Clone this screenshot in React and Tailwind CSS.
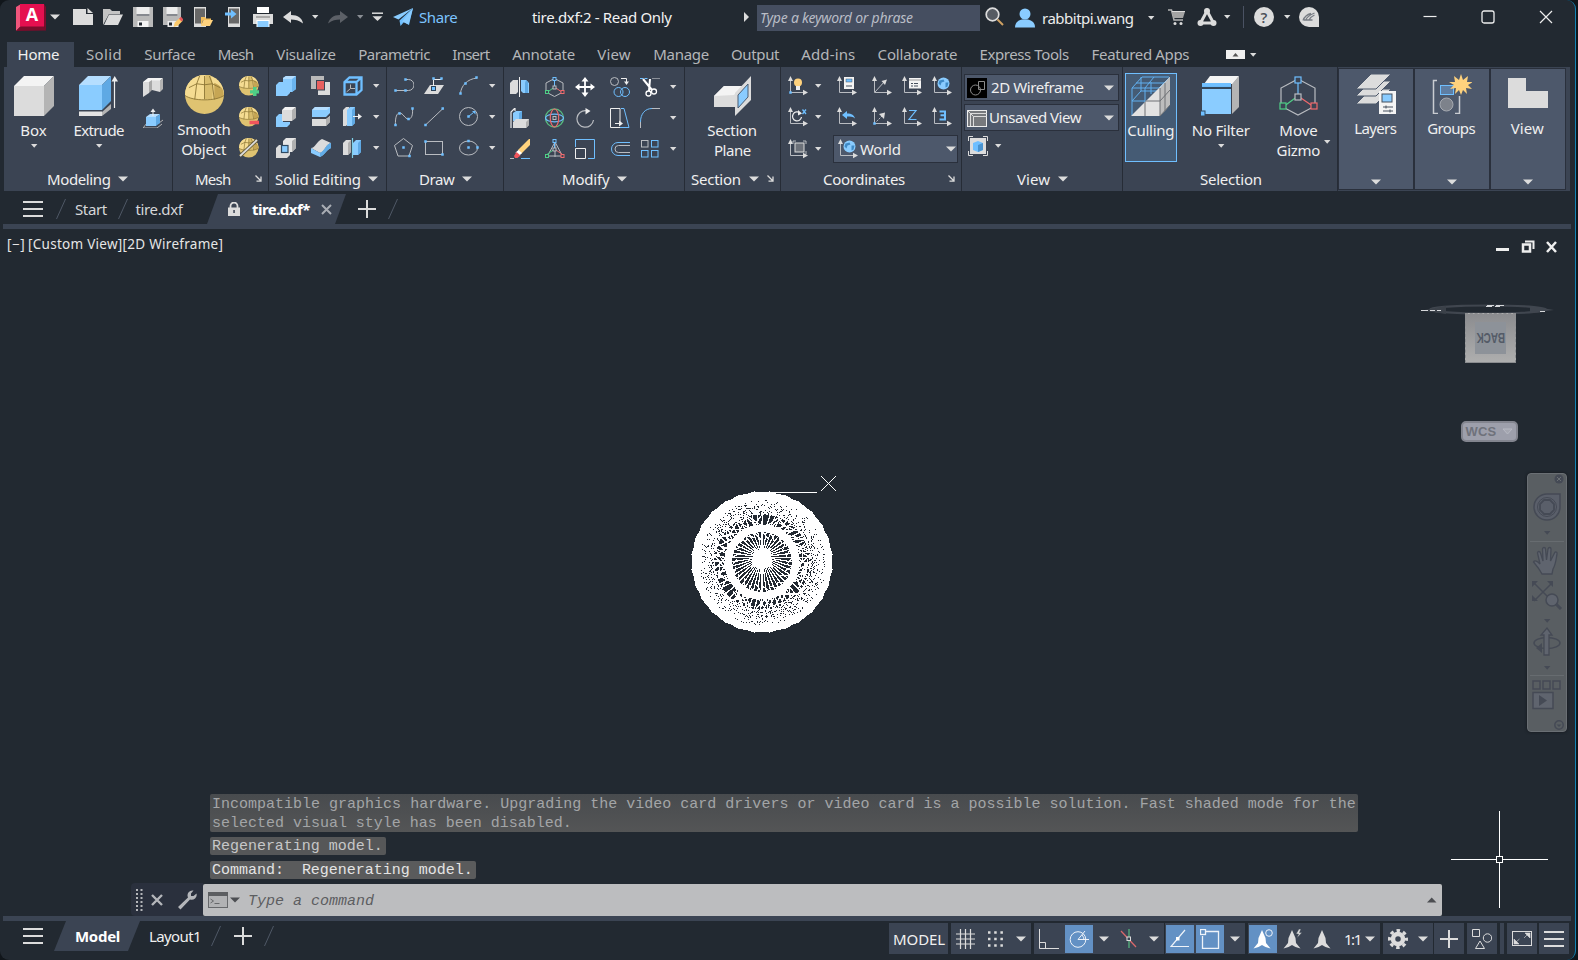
import { useLayoutEffect, useRef } from "react";

const L = "#dcdcdc";
const B = "#6fbfff";
const BL = "#8accff";

/* Text set to a given width: the letter spacing is worked out from the font's natural width. */
function T({ w, children, className = "" }) {
  const ref = useRef(null);
  useLayoutEffect(() => {
    const el = ref.current;
    el.style.letterSpacing = "0px";
    const natural = el.offsetWidth;
    el.style.letterSpacing = `${(w + 1.6 - natural) / children.length}px`;
  }, [w, children]);
  return (
    <span className="flex shrink-0 -ml-px mr-px whitespace-pre" style={{ width: w }}>
      <span ref={ref} className={`inline-block shrink-0 whitespace-pre ${className}`}>{children}</span>
    </span>
  );
}

function Svg({ w = 20, h = 20, className = "", children }) {
  return (
    <svg width={w} height={h} viewBox={`0 0 ${w} ${h}`} fill="none" className={`block shrink-0 ${className}`}>
      {children}
    </svg>
  );
}

function Caret({ big, className = "", color = L }) {
  return big ? (
    <Svg w={10} h={6} className={className}><path d="M0 .5h10L5 5.500z" fill={color} /></Svg>
  ) : (
    <Svg w={8} h={6} className={className}><path d="M1 1h6.400L4.200 4.800z" fill={color} /></Svg>
  );
}

function Launcher({ className = "" }) {
  return (
    <Svg w={7} h={7} className={className}>
      <path d="M.5.5l5 5M6 1.5v4.6H1.5" stroke={L} strokeWidth="1.3" />
    </Svg>
  );
}

/* ---------- title bar ---------- */
const Logo = () => (
  <Svg w={30} h={28}>
    <path d="M0 4L5 1v22l-5 5z" fill="#f0557c" />
    <path d="M0 28l5-5h23l2 4.5z" fill="#7a0d2c" />
    <path d="M28 1l2 3v24l-2-5z" fill="#7a0d2c" />
    <rect x="4" y="1" width="24" height="22.5" fill="#e51050" />
    <text x="16" y="18" textAnchor="middle" fontSize="18" fontWeight="700" fill="#fff" fontFamily="Open Sans, sans-serif">A</text>
  </Svg>
);
const NewFile = () => (
  <Svg><path d="M0 2h13v5h7v11H0z" fill={L} /><path d="M14.5 1l5.5 5h-5.5z" fill={L} /></Svg>
);
const OpenFile = () => (
  <Svg><path d="M0 18V2h7l2 2h8v3H6z" fill="#c4c4c4" /><path d="M6 7.5h14L15 18H1z" fill={L} /></Svg>
);
const Save = ({ pencil }) => (
  <Svg>
    <path d={pencil ? "M0 0h18v14l-4 4H0z" : "M0 0h20v20H0z"} fill="#b9b9b9" />
    <rect x="3.5" y="0" width={pencil ? 11 : 13} height="9" fill="#ececec" />
    <rect x="3.5" y="7.3" width={pencil ? 11 : 13} height="1.4" fill="#5c6068" />
    <rect x="4.5" y="14" width="11" height="6" fill={pencil ? "#ececec" : "#f4f4f4"} />
    <rect x="6" y="15.5" width="3" height="3" fill="#222931" />
    {pencil && <><path d="M10.5 20l1.3-4.5 5-4.7 3 3-5 5z" fill="#fbc96a" /><path d="M16 11.8l2-2 2.3 2.6-1.8 2z" fill="#e8555a" /></>}
  </Svg>
);
const MobileOpen = () => (
  <Svg>
    <rect x="1" y="0" width="12" height="20" fill={L} /><rect x="2" y="1.5" width="10" height="15" fill="#686868" />
    <path d="M8 19V10h4l1 1.5h5V13H10z" fill="#f3bd59" /><path d="M10.5 13H20l-3 6H8z" fill="#ffd27d" />
  </Svg>
);
const MobileSend = () => (
  <Svg>
    <rect x="5" y="0" width="12" height="20" fill={L} /><rect x="6" y="1.5" width="10" height="15" fill="#686868" />
    <path d="M2 5.5h6V2.5L13.5 7 8 11.5v-3H2z" fill={B} />
  </Svg>
);
const Print = () => (
  <Svg><rect x="4" y="0" width="12" height="6" fill="#fff" /><path d="M0 7h20v10H0z" fill={L} /><path d="M3 10h14" stroke="#777" /><rect x="3.5" y="13" width="13" height="7" fill="#fff" /><rect x="4.5" y="14" width="11" height="6" fill={BL} /></Svg>
);
const Undo = ({ redo }) => (
  <Svg>
    <path d={redo ? "M20 10l-8-6v4C5 8 2 11 0 16.5 4 13 8 12.5 12 12.5V16z" : "M0 10l8-6v4c7 0 11 3 12 8.500C16 13 12 12.500 8 12.500V16z"} fill={redo ? "#5c6067" : L} />
  </Svg>
);
const Send = () => (
  <Svg><path d="M20 1L0 10l5.500 2.500z" fill={BL} /><path d="M20 1L6.500 13.500 7.500 19l3.500-4 5 3z" fill={B} /><path d="M20 1L9 14.500l6.500 3z" fill={BL} /></Svg>
);
const Magnifier = () => (
  <Svg><circle cx="7.500" cy="7.500" r="6.300" fill="#565b62" stroke={L} strokeWidth="1.700" /><path d="M12.500 12.500l5.500 5.500" stroke="#cfa163" strokeWidth="2" /></Svg>
);
const Person = () => (
  <Svg><circle cx="10" cy="6" r="5.500" fill={BL} /><path d="M0 19.500c0-5 3-7 7-8h6c4 1 7 3 7 8z" fill={BL} /></Svg>
);
const Cart = () => (
  <Svg w={18} h={18} className="ml-[13px]"><path d="M0 2h3.500l2.500 10h9" stroke="#b4b4b4" strokeWidth="1.500" /><path d="M3.500 3.500h13.500l-2 6.500H5.500z" fill="#a4a4a4" /><path d="M4 3.500h13" stroke={L} /><circle cx="7" cy="15.500" r="1.500" fill={L} /><circle cx="13" cy="15.500" r="1.500" fill={L} /></Svg>
);
const Apps = () => (
  <Svg><path d="M10 4L3.500 16h13z" stroke={L} strokeWidth="3" /><circle cx="10" cy="4" r="3" fill={L} /><circle cx="3.500" cy="16" r="3" fill={L} /><circle cx="16.500" cy="16" r="3" fill={L} /></Svg>
);
const Help = () => (
  <Svg><circle cx="10" cy="10" r="10" fill={L} /><text x="10" y="15.500" textAnchor="middle" fontSize="15" fontWeight="600" fill="#4a4f57" fontFamily="Open Sans, sans-serif">?</text></Svg>
);
const Bubble = () => (
  <Svg><path d="M10 0a10 10 0 0 1 10 10v10H10A10 10 0 0 1 10 0z" fill={L} /><path d="M4 13.500C5.500 9.500 8 7.500 12 6.500M6.500 13.500c1-3 4-5.500 9-7.500M9.500 13.500C11 11 13 9 15.500 8M5 13h8.500" stroke="#777c84" strokeWidth="1.300" /></Svg>
);

function TitleBar() {
  return (
    <header className="flex h-[34px] items-center text-[15px]">
      <div className="ml-4"><Logo /></div>
      <Caret big className="ml-1" />
      <div className="ml-[13px] flex gap-[10px]">
        <NewFile /><OpenFile /><Save /><Save pencil /><MobileOpen /><MobileSend /><Print /><Undo />
      </div>
      <Caret className="ml-2" />
      <div className="ml-[9px]"><Undo redo /></div>
      <Caret className="ml-2" color="#8a8e94" />
      <Svg w={12} h={10} className="ml-2"><path d="M0 1.200h11" stroke={L} strokeWidth="1.500" /><path d="M.500 4.200h10L5.500 9z" fill={L} /></Svg>
      <div className="ml-[9px]"><Send /></div>
      <div className="ml-[7px] text-[#7cc4ff]"><T w={36.500}>Share</T></div>
      <div className="ml-[76.500px] text-[#f2f2f2]"><T w={138}>tire.dxf:2 - Read Only</T></div>
      <Svg w={7} h={10} className="ml-[72px]"><path d="M1 0l5 5-5 5z" fill={L} /></Svg>
      <div className="mt-[2px] ml-[7px] flex h-[26px] w-[223px] items-center bg-[#454e60] pl-[4px] text-[#b9bdc6] italic"><T w={151} className="-mt-px text-[14px]">Type a keyword or phrase</T></div>
      <div className="ml-[5px]"><Magnifier /></div>
      <div className="mt-[2px] ml-[10px]"><Person /></div>
      <div className="mt-[2px] ml-[8px] text-[#ececec]"><T w={90}>rabbitpi.wang</T></div>
      <Caret className="mt-[2px] ml-[14px]" />
      <Cart />
      <div className="ml-[11px]"><Apps /></div>
      <Caret className="ml-[6px]" />
      <div className="ml-3 h-[22px] w-px bg-[#4a5263]" />
      <div className="ml-[10px]"><Help /></div>
      <Caret className="ml-[9px]" />
      <div className="ml-2"><Bubble /></div>
      <div className="ml-[104px] flex gap-[44px]">
        <Svg w={14} h={14}><path d="M0.500 6.500h13" stroke="#eee" strokeWidth="1.200" /></Svg>
        <Svg w={14} h={14}><rect x="1" y="1" width="12" height="12" rx="2" stroke="#eee" strokeWidth="1.300" /></Svg>
        <Svg w={14} h={14}><path d="M1 1l12 12M13 1L1 13" stroke="#eee" strokeWidth="1.200" /></Svg>
      </div>
    </header>
  );
}

const TABS = [
  ["Solid", 34.3], ["Surface", 49.4], ["Mesh", 34.6], ["Visualize", 58], ["Parametric", 70], ["Insert", 36],
  ["Annotate", 61], ["View", 32], ["Manage", 53.7], ["Output", 46.3], ["Add-ins", 52.3], ["Collaborate", 78],
  ["Express Tools", 88], ["Featured Apps", 96],
];

function Tabs() {
  return (
    <nav className="mt-2 flex h-[25px] items-center pl-[7px] text-[15px] text-[#b4b6b9]">
      <div className="flex h-full w-[67px] items-center bg-[#3b4453] pl-[11.500px] text-[#f0f0f0]"><T w={40.5}>Home</T></div>
      <div className="ml-[13px] flex gap-6">
        {TABS.map(([t, w]) => <T key={t} w={w}>{t}</T>)}
      </div>
      <Svg w={19} h={9} className="ml-[37px]"><rect width="19" height="9" fill="#f0f0f0" /><path d="M6.500 6.500h6L9.500 3z" fill="#555" /></Svg>
      <Caret className="ml-[4px]" />
    </nav>
  );
}

/* ---------- ribbon icons ---------- */
const BoxBig = () => (
  <Svg w={40} h={40}><path d="M0 10L10 0h30L30 10z" fill="#f4f4f4" /><path d="M0 10h30v30H0z" fill={L} /><path d="M30 10L40 0v30L30 40z" fill="#b4b4b4" /></Svg>
);
const ExtrudeBig = () => (
  <Svg w={40} h={40}>
    <path d="M0 9l9-9h23l-9 9z" fill="#b5deff" /><path d="M0 9h23v25H0z" fill={BL} /><path d="M23 9l9-9v25l-9 9z" fill="#5fa9e4" />
    <path d="M0 35.500h23V40H0z" fill="#e4e4e4" /><path d="M23 36l9-8v5l-9 7z" fill="#b4b4b4" />
    <path d="M35.500 4v28" stroke="#eee" strokeWidth="1.200" /><path d="M32.500 5.500h6.500L35.700 0z" fill="#eee" />
  </Svg>
);
const Polysolid = () => (
  <Svg><path d="M0 5l5-4h15l-3 3H9L6 6z" fill="#f4f4f4" /><path d="M0 5h6v11l-6 4z" fill={L} /><path d="M6 5l3-2v10l-3 3z" fill="#a8a8a8" /><path d="M9 3.500h8V15l-8-2z" fill={L} /><path d="M17 3.500l3-2.500v11l-3 3z" fill="#b4b4b4" /></Svg>
);
const Presspull = () => (
  <Svg><path d="M0 20l4-5h12l4-3M0 20h14l5-4" stroke="#b4b4b4" /><path d="M3 9l4-3h10l-4 3z" fill="#b5deff" /><path d="M3 9h10v9H3z" fill={BL} /><path d="M13 9l4-3v9l-4 3z" fill="#5fa9e4" /><path d="M10 8V3" stroke="#eee" /><path d="M7.500 4h5L10 .500z" fill="#eee" /></Svg>
);
const Sphere = ({ w = 20, children }) => (
  <Svg w={w} h={w}>
    <g transform={`scale(${(w > 20 ? w : 19.5) / 40})`}>
      <circle cx="20" cy="20" r="20" fill="#dfc371" />
      <path d="M0 21C0 8 9 0 20 0s20 8 20 21c-4 3-11 4.500-19 4.500S4 24 0 21z" fill="#f5dc92" />
      <path d="M21 0h5l3 10-1 15H20V9z" fill="#d9bd6c" /><path d="M30 8c4 2 8 4 9 8 1 4 1 5 0 6l-9 3z" fill="#c6a654" />
      <path d="M12 9l8 1 8-1 8 4M12 9l-8 4M12 9l-2 16M20 1v24M28 9l2 16M28 9L25 1M12 9l3-8M0 21c4 3 12 4.500 20 4.500S36 24 40 21" stroke="#8a7434" strokeWidth={w > 20 ? 0.9 : 1.4} />
    </g>
    {children}
  </Svg>
);
const SphereAdd = () => <Sphere><path d="M14 11h3.500v3.300H20v3.200h-2.500V20H14v-2.500h-3v-3.200h3z" fill="#4fcf86" /></Sphere>;
const SphereSub = () => <Sphere><path d="M10.500 13.700H20v3.600h-9.500z" fill="#f0555c" /></Sphere>;
const SphereCut = () => <Sphere><path d="M1 18L18 2" stroke="#5f5530" strokeWidth="3.500" /><path d="M1 18L18 2" stroke={L} strokeWidth="1.800" /></Sphere>;

const Union = () => (
  <Svg><path d="M7 2l3-2h10v13l-4 3h-2v1l-3 3H0V9l3-3h4z" fill={BL} /><path d="M7 2l3-2h10l-3 3H7z" fill="#b5deff" /><path d="M16 3l4-3v13l-4 3z" fill="#6bb4ee" /></Svg>
);
const Intersect = () => (
  <Svg><path d="M0 0h13v13H0z" fill="#b9b9b9" /><path d="M7 6h12v13H7z" fill={L} /><rect x="5.500" y="4.500" width="8" height="9.500" fill="#e8605f" stroke="#3b4453" /></Svg>
);
const Subtract = () => (
  <Svg><path d="M0 10l3-3h4v8h7v2l-3 3H0z" fill={BL} /><path d="M6 3l3-3h11l-3 3z" fill="#f4f4f4" /><path d="M6 3h10v11H6z" fill={L} /><path d="M16 3l4-3v11l-4 3z" fill="#b0b0b0" /></Svg>
);
const Interfere = () => (
  <Svg><path d="M0 10l3-3h11v10l-3 3H0z" fill={L} /><path d="M7 3l3-3h10v10l-4 4H7z" fill="#e6e6e6" /><path d="M16 3l4-3v10l-4 4z" fill="#b0b0b0" /><rect x="5.500" y="7.500" width="6.500" height="7" fill={BL} stroke="#2f4a63" strokeWidth="1.200" /></Svg>
);
const Edges = () => (
  <Svg><path d="M1.500 6l5-4.500h12V14l-5 4.500h-12zM1.500 6h12v12.500M13.500 6l5-4.500" stroke={B} strokeWidth="2.300" /><path d="M7.500 8.500v4l-4 3.500M7.500 12.500H12" stroke="#b9b9b9" /></Svg>
);
const Slice = () => (
  <Svg><path d="M1 3l3-3h15v6l-4 4H1z" fill={BL} /><path d="M1 3l3-3h15l-3 3z" fill="#b5deff" /><path d="M1 12h14l4-3v6l-4 4H1z" fill={L} /><path d="M15 12l4-3v6l-4 4z" fill="#b0b0b0" /><path d="M0 11h15l5-4" stroke="#3b4453" /></Svg>
);
const ExtrudeFace = () => (
  <Svg><path d="M0 3l3-3h3v16l-3 3H0z" fill={L} /><path d="M4 3l3-3h5v16l-3 3H4z" fill={BL} /><path d="M9 3l3-3v16l-3 3z" fill="#5fa9e4" /><path d="M10 9.500h7" stroke="#eee" /><path d="M15 6.500l4 3-4 3z" fill="#eee" /></Svg>
);
const Thicken = () => (
  <Svg><path d="M0 10c4 0 6-7 11-9l9 4c-5 1-6 8-11 10z" fill={L} /><path d="M0 10l9 5c5-2 6-9 11-10v5c-5 2-6 7-11 9l-9-4z" fill={BL} /><path d="M9 15c5-2 6-9 11-10v5c-5 2-6 7-11 9z" fill="#62ace6" /></Svg>
);
const Separate = () => (
  <Svg><path d="M0 5l3-3h5v12l-3 3H0z" fill={L} /><path d="M5 5l3-3v12l-3 3z" fill="#b0b0b0" /><path d="M10 5l3-3h5v12l-3 3h-5z" fill={BL} /><path d="M15 5l3-3v12l-3 3z" fill="#5fa9e4" /><path d="M9.500 0v20" stroke="#7fd0e8" strokeWidth="1.200" /></Svg>
);

const P = ({ x, y }) => <rect x={x - 1.25} y={y - 1.25} width="2.500" height="2.500" fill={B} />;
const G = "#b9bcc1";
const Polyline = () => <Svg><path d="M1.500 14.500h10M11.500 3.500h3a5.200 5.200 0 0 1 0 11h-3" stroke={G} /><P x={1.500} y={14.500} /><P x={11.500} y={14.500} /><P x={11.500} y={3.500} /></Svg>;
const PlanarSurf = () => <Svg><path d="M6 9h14l-6 9H0z" fill={L} /><path d="M9.500 13V3.500h8" stroke="#eee" /><rect x="7.500" y="10.500" width="4" height="4" fill={B} stroke="#2c4258" /><P x={9.500} y={2.500} /><P x={17.500} y={2.500} /></Svg>;
const Arc = () => <Svg><path d="M1.500 17.500C2 10 8 3 18 2" stroke={G} /><P x={1.500} y={17.500} /><P x={6.500} y={7.500} /><P x={17.500} y={1.500} /></Svg>;
const Spline = () => <Svg><path d="M1.500 18.500C1 10 3 6 5.500 6c4 0 5 6 9 6 3 0 4.500-4 4-10" stroke={G} /><P x={1.500} y={18} /><P x={5.500} y={6.500} /><P x={14.500} y={12} /><P x={18.500} y={1.500} /></Svg>;
const Line = () => <Svg><path d="M1.500 18L19 1.500" stroke={G} /><P x={1.500} y={18} /><P x={18.700} y={1.500} /></Svg>;
const Circle = () => <Svg><circle cx="9.500" cy="9.500" r="9" stroke={G} /><path d="M9.500 9.500l5-4" stroke={B} /><path d="M13 4h3.500v3.500z" fill={B} /><P x={9.500} y={9.500} /></Svg>;
const Polygon = () => <Svg><path d="M9.500.500l9 7-3.500 10.500H4L.500 7.500z" stroke={G} /><P x={9.500} y={9.500} /><P x={15.500} y={18} /></Svg>;
const Rect = () => <Svg><rect x="1.500" y="3.500" width="17" height="13" stroke={G} /><P x={1.500} y={3.500} /><P x={18.500} y={16.500} /></Svg>;
const Ellipse = () => <Svg><ellipse cx="9.500" cy="10" rx="9" ry="7" stroke={G} /><P x={9.500} y={9.500} /><P x={9.500} y={3} /><P x={18.500} y={9.500} /></Svg>;

const Mirror = () => <Svg><path d="M0 6l3-3h5v12l-2 2H0z" fill={L} /><path d="M11 3h5l3 3v10h-6l-2-2z" fill={BL} /><path d="M16 3l2 2v11h-3V6z" fill="#5fa9e4" /><path d="M9.500 0v20" stroke="#eee" /></Svg>;
const Gizmo = ({ scale = 1, tri }) => (
  <Svg w={20 * scale} h={20 * scale}>
    <g transform={`scale(${scale})`} strokeWidth={scale > 1 ? 0.6 : 1}>
      {tri ? <path d="M10 3L2.500 17h15zM10 2v16" stroke={G} /> : <path d="M9.500 1.500L18 6v9l-8.500 4.500L1 15V6z" stroke={G} />}
      <path d="M9.500 3v7" stroke={B} /><path d="M9.500 10L2 15.500" stroke="#4fcf86" /><path d="M9.500 10l8 5.500" stroke="#f0696c" />
      <rect x="8" y=".500" width="3" height="3" fill="#3b4453" stroke={B} />
      <rect x="8" y="9" width="3" height="3" fill="#3b4453" stroke={G} />
      <rect x=".500" y={tri ? 15.5 : 13.5} width="3" height="3" fill="#3b4453" stroke="#4fcf86" />
      <rect x="16" y={tri ? 15.5 : 13.5} width="3" height="3" fill="#3b4453" stroke="#f0696c" />
    </g>
  </Svg>
);
const Move = () => <Svg><path d="M10 2v16M2 10h16" stroke="#fff" strokeWidth="1.800" /><path d="M6.500 4.500h7L10 0zM6.500 15.500h7L10 20zM4.500 6.500v7L0 10zM15.500 6.500v7L20 10z" fill="#fff" /></Svg>;
const Copy = () => <Svg><circle cx="4.500" cy="4.500" r="4" stroke={G} /><path d="M11 1.500h5.500V5" stroke="#eee" /><path d="M14 4.500h5L16.500 8z" fill="#eee" /><circle cx="8.500" cy="15" r="4.500" stroke={B} /><circle cx="15" cy="15" r="4.500" stroke={B} /></Svg>;
const Trim = () => <Svg><path d="M0 1.500h9" stroke={B} strokeDasharray="3 1.500" /><path d="M12 1.500h8" stroke="#8b9098" /><path d="M3 2l9 11M10 2l-1 12" stroke="#fff" strokeWidth="2" /><circle cx="8.500" cy="16.500" r="2.500" stroke="#fff" strokeWidth="1.300" /><circle cx="14" cy="14.500" r="2.500" stroke="#fff" strokeWidth="1.300" /></Svg>;
const Align = () => <Svg><path d="M1 20V4l4-4v3" stroke="#eee" strokeWidth="1.200" /><path d="M3 5l3-2h6v7l-3 3H3z" fill={BL} /><path d="M9 5l3-2v7l-3 3z" fill="#5fa9e4" /><path d="M3 14l3-3h13v6l-3 3H3z" fill={L} /><path d="M16 14l3-3v6l-3 3z" fill="#b0b0b0" /></Svg>;
const Rotate3D = () => <Svg><circle cx="9.500" cy="10" r="9" stroke="#58bd80" strokeWidth="1.300" /><ellipse cx="9.500" cy="10" rx="9" ry="3.800" stroke={B} strokeWidth="1.200" /><ellipse cx="9.500" cy="10" rx="4.200" ry="9" stroke="#e8696c" strokeWidth="1.200" /><rect x="8" y="8.500" width="3" height="3" fill="#3b4453" stroke={G} /></Svg>;
const Rotate = () => <Svg><path d="M11 2.600A8.300 8.300 0 1 0 18.500 12" stroke={G} strokeWidth="1.200" /><path d="M10.500 0l5 3-5 3.500z" fill="#eee" /></Svg>;
const Stretch = () => <Svg><path d="M10 15.500V.500H.500v19h9.500" stroke="#eee" /><path d="M11 .500h3l5 19h-9" stroke={B} /><path d="M5 15.500h5" stroke="#eee" /><path d="M9 12.500l4 3-4 3z" fill="#eee" /></Svg>;
const Fillet = () => <Svg><path d="M.500 20v-6" stroke={G} /><path d="M.500 14C.500 6 5 .500 12 .500" stroke={B} /><path d="M12 .500h8" stroke={G} /></Svg>;
const Erase = () => <Svg><path d="M0 19.500h4" stroke={G} /><path d="M11 19.500h9" stroke={B} /><path d="M8 11L19 0h1v6l-9 9z" fill="#ffd27d" /><path d="M5.500 13.500l3-2.500 3.500 3-3 3z" fill="#fff" /><path d="M4 17l2.500-4 4 3.500-3 2.500H5z" fill="#f0555c" /></Svg>;
const Scale = () => <Svg><path d="M.500 8V.500h19v19H13" stroke={B} /><path d="M.500 9.500h10v10H.500z" stroke="#eee" /></Svg>;
const Offset = () => <Svg><path d="M20 3.500H8a6.500 6.500 0 0 0 0 13h12" stroke={B} /><path d="M20 6.500H8.500a3.500 3.500 0 0 0 0 7H20" stroke={G} /></Svg>;
const ArrayIcon = () => <Svg><rect x="1.500" y="1.500" width="6.500" height="6.500" stroke={G} /><rect x="11.500" y="1.500" width="6.500" height="6.500" stroke={B} /><rect x="1.500" y="11.500" width="6.500" height="6.500" stroke={B} /><rect x="11.500" y="11.500" width="6.500" height="6.500" stroke={B} /></Svg>;

const SectionBig = () => (
  <Svg w={40} h={40}><path d="M1 20l10-10h18v21H1z" fill={L} /><path d="M1 20l10-10h18L21 19z" fill="#f4f4f4" /><path d="M22 17L38 0v24L22 40z" fill={L} /><path d="M25 19l10-11v13L25 32z" fill={BL} stroke="#4a5d73" /></Svg>
);

const Axes = ({ children }) => (
  <Svg><path d="M2.500 4v12.500H16" stroke={G} /><path d="M0 5h5L2.500 0zM15 13.700v5.600l5-2.800z" fill={L} />{children}</Svg>
);
const Globe = ({ x = 11.5, y = 7.5 }) => <g transform={`translate(${x} ${y})`}><circle r="6" fill={BL} /><path d="M-4-3l4-1 1 2-3 1-1 3-2-2zM2-1l3 0-1 4-2 1z" fill="#3f8ac6" /></g>;
const UcsIcon = () => <Axes><circle cx="10" cy="6.500" r="4" fill="#ffd27d" /><path d="M8 10h4v4H8z" fill="#eee" /><P x={2.500} y={16.500} /></Axes>;
const UcsCalc = () => <Axes><rect x="7" y="1" width="10" height="12" fill="#f4f4f4" /><rect x="9" y="3" width="6" height="3" fill={B} stroke="#46505e" strokeWidth=".500" /><path d="M9 10h6" stroke="#46505e" /></Axes>;
const UcsArrow = () => <Axes><path d="M3 16L13 5" stroke={G} /><path d="M9.500 5L15 3.500 13 9z" fill={L} /></Axes>;
const UcsNamed = () => <Axes><rect x="7" y="2" width="12" height="10.500" fill="#f4f4f4" /><path d="M7 4h12" stroke="#999" /><path d="M9 7.500h2m1 0h4M9 10h2m1 0h4" stroke="#46505e" /></Axes>;
const UcsWorld = () => <Axes><Globe /></Axes>;
const UcsRotX = () => <Axes><path d="M12 6a4.500 4.500 0 1 0 1.500 4" stroke="#eee" strokeWidth="1.200" /><path d="M10 3l4 3.500-4 2z" fill="#eee" /><path d="M14.500 2.500l3.500 4.500M18 2.500l-3.500 4.500" stroke={B} strokeWidth="1.300" /></Axes>;
const UcsPrev = () => <Axes><path d="M5 8l5-4v2.500c5 0 7 1.500 8 5-2-2-5-2-8-2V12z" fill={B} /></Axes>;
const UcsOrigin = () => <Axes><path d="M4.500 14.500L11 8" stroke={G} strokeDasharray="2 1" /><path d="M7 7l6-1.500L12 12z" fill={L} /><P x={2.500} y={16.500} /></Axes>;
const UcsZ = () => <Axes><path d="M7 3.500h7L7 12.500h7.500" stroke={B} strokeWidth="1.200" /></Axes>;
const Ucs3 = () => <Axes><path d="M7.500 4.500h5.500v8H7.500M8.500 8.300h4.500" stroke={B} strokeWidth="2" /></Axes>;
const UcsView = () => <Axes><rect x="7" y="4" width="9" height="9" fill="#6d727a" stroke={L} /><path d="M5 5V2h3M15 2h3v3M18 12v3" stroke={G} /></Axes>;

const CullBig = () => (
  <Svg w={40} h={40}>
    <path d="M1 39V12L11 1h27M1 12h27M1 25h18M14 39V12l9-11M28 12L39 1M1 25l9-10h18M10 1v14M20 6v12M5 7h28" stroke="#61b0f0" />
    <path d="M0 40L39 1v28L29 40z" fill="#e2e2e2" /><path d="M29 12L39 1v28L29 40z" fill="#bdbdbd" /><path d="M14 26v14M14 25h15M29 12v28l10-11M29 25l10-11M34 7v28" stroke="#6e7175" />
  </Svg>
);
const FilterBig = () => (
  <Svg w={40} h={40}><path d="M3 8l6-8h29l-6 8z" fill="#f4f4f4" /><path d="M31 8l7-8v31l-7 7z" fill="#b4b4b4" /><rect x="1" y="7" width="29" height="4" fill={B} /><rect x="1" y="13" width="29" height="25" fill={BL} /><path d="M0 11.700h30" stroke="#2f4a63" strokeWidth="1.500" /><rect x="-1" y="35" width="5" height="5" fill={B} stroke="#2f4a63" /></Svg>
);
const LayersBig = () => (
  <Svg w={40} h={40}>
    <path d="M0 30l15-15h20L20 30z" fill={L} stroke="#4d586b" /><path d="M0 22L15 7h20L20 22z" fill={L} stroke="#4d586b" /><path d="M0 15L15 0h20L20 15z" fill={L} stroke="#4d586b" />
    <rect x="23" y="17" width="17" height="23" fill="#f4f4f4" /><rect x="26" y="20" width="10" height="8" fill={BL} stroke="#46505e" /><path d="M27 33h10M27 37h10M30 31.500v3M34 35.500v3" stroke="#46505e" />
  </Svg>
);
const GroupsBig = () => (
  <Svg w={40} h={40}>
    <path d="M5 6.500H1.500v33H6M23 39.500h4.500V22" stroke="#c9ccd1" strokeWidth="1.500" /><rect x="8.500" y="11.500" width="13" height="9" fill="#5f7ea3" stroke={B} /><circle cx="14.500" cy="30.500" r="6.500" fill="#7d828b" stroke="#a6aab1" />
    <path d="M29 0l2 6 5-4-1 6h6l-5 3 4 4-6-1 1 6-4-4-2 5-2-5-4 4 1-6-6 1 4-4-5-3h6l-1-6 5 4z" fill="#ffd27d" />
  </Svg>
);
const ViewBig = () => <Svg w={40} h={40}><path d="M0 4h18v13h22v17H0z" fill={L} /></Svg>;

/* ---------- ribbon ---------- */
function Panel({ className, title, tw, footPad, caret, launcher, children }) {
  return (
    <section className={`flex shrink-0 flex-col border-r border-[#262c36] ${className}`}>
      <div className="h-[100px] shrink-0">{children}</div>
      <div className={`flex h-[23px] items-center ${footPad}`}>
        <T w={tw}>{title}</T>
        {caret && <Caret big className="ml-[8px]" />}
        {launcher && <Launcher className="mr-[6px] ml-auto" />}
      </div>
    </section>
  );
}

function BigButton({ icon, lines, caret, gap = "mt-[4px]", className = "" }) {
  return (
    <div className={`flex flex-col items-center ${className}`}>
      {icon}
      <div className={`flex flex-col items-center leading-5 ${gap}`}>
        {lines.map(([t, w]) => <T key={t} w={w}>{t}</T>)}
      </div>
      {caret && <Caret className="mt-[3px]" />}
    </div>
  );
}

function Ribbon() {
  return (
    <div className="ml-1 flex h-[124px] w-[1566px] overflow-hidden bg-[#3b4453] text-[15px] leading-5 text-[#efefef]">
      <Panel className="w-[169px]" title="Modeling" tw={62.3} footPad="pl-[44px]" caret>
        <div className="flex pt-[9px]">
          <BigButton className="ml-[8.500px] w-[42px]" icon={<BoxBig />} lines={[["Box", 24.3]]} caret />
          <BigButton className="ml-[19.500px] w-[50px]" icon={<ExtrudeBig />} lines={[["Extrude", 49]]} caret />
          <div className="mt-px ml-[19px] flex flex-col gap-[11px]"><Polysolid /><Presspull /></div>
        </div>
      </Panel>
      <Panel className="w-[96px]" title="Mesh" tw={34.3} footPad="pl-[23px]" launcher>
        <div className="flex pt-[8px]">
          <BigButton className="ml-[5px] w-[52px]" gap="mt-[5px]" icon={<Sphere w={39} />} lines={[["Smooth", 51.3], ["Object", 43.7]]} />
          <div className="mt-px ml-[9px] flex flex-col gap-[11px]"><SphereAdd /><SphereSub /><SphereCut /></div>
        </div>
      </Panel>
      <Panel className="w-[118px]" title="Solid Editing" tw={84} footPad="pl-[7px]" caret>
        <div className="grid grid-cols-[35px_32px_29px_8px] items-center gap-y-[11px] pt-[9px] pl-[7px]">
          <Union /><Intersect /><Edges /><Caret />
          <Subtract /><Slice /><ExtrudeFace /><Caret />
          <Interfere /><Thicken /><Separate /><Caret />
        </div>
      </Panel>
      <Panel className="w-[117px]" title="Draw" tw={33.7} footPad="pl-[33px]" caret>
        <div className="grid grid-cols-[30px_35px_29px_8px] items-center gap-y-[11px] pt-[9px] pl-[7px]">
          <Polyline /><PlanarSurf /><Arc /><Caret />
          <Spline /><Line /><Circle /><Caret />
          <Polygon /><Rect /><Ellipse /><Caret />
        </div>
      </Panel>
      <Panel className="w-[181px]" title="Modify" tw={46.3} footPad="pl-[59px]" caret>
        <div className="grid grid-cols-[35px_30px_35px_30px_29px_8px] items-center gap-y-[11px] pt-[10px] pl-[6px]">
          <Mirror /><Gizmo /><Move /><Copy /><Trim /><Caret />
          <Align /><Rotate3D /><Rotate /><Stretch /><Fillet /><Caret />
          <Erase /><Gizmo tri /><Scale /><Offset /><ArrayIcon /><Caret />
        </div>
      </Panel>
      <Panel className="w-[96px]" title="Section" tw={48.7} footPad="pl-[7px]" caret launcher>
        <BigButton className="pt-[9px]" icon={<SectionBig />} lines={[["Section", 48.3], ["Plane", 35]]} />
      </Panel>
      <Panel className="w-[181px]" title="Coordinates" tw={80} footPad="pl-[43px]" launcher>
        <div className="grid grid-cols-[26px_23px_35px_30px_30px_20px] items-center gap-y-[11px] pt-[9px] pl-[7px]">
          <UcsIcon /><Caret /><UcsCalc /><UcsArrow /><UcsNamed /><UcsWorld />
          <UcsRotX /><Caret /><UcsPrev /><UcsOrigin /><UcsZ /><Ucs3 />
        </div>
        <div className="mt-[8px] flex items-center pl-[7px]">
          <UcsView /><Caret className="ml-[6px]" />
          <div className="ml-[11px] flex h-[28px] w-[125px] items-center border border-[#2a303c] bg-[#4d586b] pl-[4px]">
            <UcsWorld /><span className="ml-[3px]"><T w={39}>World</T></span><Caret big className="mr-[1px] ml-auto" />
          </div>
        </div>
      </Panel>
      <Panel className="w-[161px]" title="View" tw={31.7} footPad="pl-[56px]" caret>
        <div className="flex flex-col gap-[3px] pt-[7px] pl-[2px]">
          <div className="flex h-[27px] w-[155px] items-center border border-[#2a303c] bg-[#4d586b] pl-[2px]">
            <Svg><rect width="20" height="20" fill="#000" /><circle cx="8.500" cy="12" r="5" stroke="#8b8b8b" /><path d="M11.500 3.500h6v8h-6z" stroke="#8b8b8b" /></Svg>
            <span className="-mt-[2px] ml-[5px]"><T w={91.500}>2D Wireframe</T></span><Caret big className="mr-[4px] ml-auto" />
          </div>
          <div className="flex h-[27px] w-[155px] items-center border border-[#2a303c] bg-[#4d586b] pl-[2px]">
            <Svg><rect x=".500" y="2.500" width="19" height="16" fill="#77797d" stroke="#eee" /><path d="M3.500 18V5.500H20M6.500 18V8.500H20M.500 2.500l6 6" stroke={L} /></Svg>
            <span className="-mt-[2px] ml-[3px]"><T w={90.500}>Unsaved View</T></span><Caret big className="mr-[4px] ml-auto" />
          </div>
          <div className="mt-[2px] flex items-center pl-[4px]">
            <Svg><path d="M.500 5V.500H5M15 .500h4.500V5M19.500 15v4.500H15M5 19.500H.500V15" stroke={L} /><rect x="2" y="2" width="16" height="16" fill={L} /><path d="M5 7l5-2 5 2v7l-5 2-5-2z" fill={B} /><path d="M10 9l5-2v7l-5 2z" fill="#4a93cf" /></Svg>
            <Caret className="ml-[6px]" />
          </div>
        </div>
      </Panel>
      <Panel className="w-[215px]" title="Selection" tw={60.3} footPad="pl-[78px]">
        <div className="flex pt-[6px]">
          <BigButton className="ml-[2px] h-[89px] w-[52px] border border-[#6fbfff] bg-[#455b74] pt-[2px]" icon={<CullBig />} lines={[["Culling", 45.7]]} />
          <BigButton className="ml-[14px] w-[60px] pt-[3px]" icon={<FilterBig />} lines={[["No Filter", 56.3]]} caret />
          <BigButton className="ml-[25.500px] w-[44px] pt-[3px]" icon={<Gizmo scale={2} />} lines={[["Move", 36.3], ["Gizmo", 42]]} />
          <Caret className="mt-[66px] ml-[2.500px]" />
        </div>
      </Panel>
      {[[<LayersBig />, "Layers", 40.7], [<GroupsBig />, "Groups", 46.7], [<ViewBig />, "View", 31.7]].map(([icon, t, w], i) => (
        <section key={i} className="mt-px flex h-[122px] w-[76px] shrink-0 flex-col items-center border border-[#2a303c] bg-[#4d586b] pt-[5px] pr-px">
          {icon}
          <div className="mt-[4px]"><T w={w}>{t}</T></div>
          <Caret big className="mt-auto mb-[4px]" />
        </section>
      ))}
    </div>
  );
}

const Slash = ({ className = "" }) => <Svg w={12} h={20} className={className}><path d="M1.500 20L10.500 0" stroke="#4f5866" /></Svg>;
const Menu = () => <Svg><path d="M0 3h20M0 10h20M0 17h20" stroke={L} strokeWidth="2" /></Svg>;
const Plus = () => <Svg w={18} h={18}><path d="M9 0v18M0 9h18" stroke={L} strokeWidth="2" /></Svg>;

function FileTabs() {
  return (
    <div className="flex h-[33px] items-center text-[15px] leading-5 text-[#d6d7d9]">
      <div className="ml-[23px] pt-[3px]"><Menu /></div>
      <Slash className="mt-[2px] ml-[12px]" />
      <div className="ml-[9px] pt-[2px]"><T w={30.500}>Start</T></div>
      <Slash className="mt-[2px] ml-[10px]" />
      <div className="ml-[8px] pt-[2px]"><T w={45.500}>tire.dxf</T></div>
      <div className="mt-[3px] ml-[25px] flex h-[30px] w-[139px] items-center bg-[#3b4453] pl-[21px] [clip-path:polygon(11px_0,139px_0,128px_100%,0_100%)]">
        <Svg w={12} h={14}><path d="M2.500 6V4a3.500 3.500 0 0 1 7 0v2" stroke={L} strokeWidth="1.800" /><rect y="5.500" width="12" height="8.500" fill={L} /><rect x="5.300" y="8" width="1.500" height="3" fill="#3b4453" /></Svg>
        <span className="ml-[13px] font-bold text-white"><T w={56.500}>tire.dxf*</T></span>
        <Svg w={11} h={11} className="ml-[11px]"><path d="M1 1l9 9M10 1l-9 9" stroke="#a9adb4" strokeWidth="2" /></Svg>
      </div>
      <div className="ml-[12px] pt-[2px]"><Plus /></div>
      <Slash className="mt-[2px] ml-[11px]" />
    </div>
  );
}

/* ---------- drawing area ---------- */
function buildTire() {
  let seed = 7;
  const rnd = () => ((seed = (seed * 1103515245 + 12345) & 0x7fffffff) / 0x7fffffff);
  const pt = (a, r, dy = 0) => `${(Math.cos(a) * r).toFixed(1)} ${(Math.sin(a) * r + dy).toFixed(1)}`;
  const turn = Math.PI * 2;
  let holes = "";
  for (let y = -70; y < 70; y++) {
    for (let x = -70; x < 71; x++) {
      const r = Math.hypot(x, y);
      if (r <= 47 || r >= 63) continue;
      if (rnd() < 0.26 * (1 - (r - 47) / 20)) holes += `M${x} ${y}h${rnd() < 0.4 ? 2 : 1}v1h-1z`;
    }
  }
  /* white facets over the two dark bands: sidewall and hub */
  let facets = "";
  const n = 52;
  for (let i = 0; i < n; i++) {
    const a = (i / n) * turn;
    const b = a + (1.5 + rnd() * 2) * (turn / n) * (rnd() < 0.5 ? -1 : 1);
    facets += `M${pt(a, 36)}L${pt(a + rnd() * 0.06, 49)}M${pt(a, 36)}L${pt(b, 49)}`;
  }
  for (let i = 0; i < 14; i++) {
    const a = rnd() * turn;
    facets += `M${pt(a, 41 + rnd() * 6)}L${pt(a + 0.35, 41 + rnd() * 6)}`;
  }
  let spokes = "";
  for (let i = 0; i < 44; i++) {
    const a = (i / 44) * turn;
    spokes += `M0 -5L${pt(a, 31)}`;
    if (i % 2) spokes += `M${pt(a, 31)}L${pt(a + 0.25, 22 + rnd() * 5)}`;
  }
  let rim = "";
  for (let i = 0; i < 56; i++) rim += `${i ? "L" : "M"}${pt((i / 56) * turn, i % 2 ? 71 : 69.8)}`;
  return { holes, facets, spokes, rim: rim + "z" };
}
const TIRE = buildTire();

function Tire() {
  return (
    <svg width="160" height="160" viewBox="-76 -88 160 160" shapeRendering="crispEdges" className="absolute top-[245px] left-[686px]" fill="none">
      <path d={TIRE.rim} fill="#fff" />
      <path d={TIRE.holes} fill="#222931" />
      <circle r="42.500" stroke="#222931" strokeWidth="10" />
      <path d={TIRE.facets} stroke="#fff" strokeWidth="1.300" />
      <circle r="30" fill="#222931" />
      <path d={TIRE.spokes} stroke="#fff" strokeWidth="1.200" />
      <circle cy="-5" r="6.500" fill="#fff" />
      <path d="M-9-69.500H55M59-86l15 15M74-86L59-71" stroke="#fff" />
    </svg>
  );
}

function ViewCube() {
  return (
    <div className="absolute top-[75px] left-[1420px] flex w-[136px] flex-col items-center">
      <Svg w={136} h={11} className="-mb-[2px]">
        <ellipse cx="68" cy="5.500" rx="58" ry="4" stroke="#40464f" strokeWidth="2" />
        <path d="M2 6.500L26 2v8z" fill="#3b4149" /><path d="M134 6L110 2v7z" fill="#40464f" />
        <path d="M1 6.500h7M10 6.500h5M17 6.500h4M67 1.500h7M76 1.500h8M66 2.500h6M75 2.500h5M120 7.500h5" stroke="#d5d7da" strokeWidth="1.200" />
      </Svg>
      <div className="ml-[4px] flex h-[50px] w-[51px] items-center justify-center border border-dashed border-[#8b8d90] bg-linear-to-b from-[#8b8c8f] to-[#aeaeae]">
        <div className="flex h-[32px] w-[31px] rotate-180 items-center justify-center bg-[#8d9299] font-['Liberation_Sans'] text-[10px] font-bold text-[#545b67]"><T w={27} className="scale-y-[1.400]">BACK</T></div>
      </div>
      <div className="mt-[58px] ml-[2px] flex h-[21px] w-[57px] items-center rounded-[5px] border-2 border-[#83858f] bg-[#9d9fab] pl-[4px] font-['Liberation_Sans'] text-[13px] font-bold text-[#6f727b]">
        <T w={29}>WCS</T>
        <Svg w={11} h={7} className="ml-[6px]"><path d="M1 1h9L5.500 6z" stroke="#b7b9c3" fill="#a5a7b1" /></Svg>
      </div>
    </div>
  );
}

function NavBar() {
  const c = "#454a55";
  return (
    <div className="absolute top-[244px] left-[1527px] flex h-[259px] w-[40px] flex-col items-center rounded-[4px] border border-[#6a6f74] bg-[#595e62] shadow-[0_0_3px_#12161b]">
      <Svg w={10} h={10} className="mr-[2px] self-end"><circle cx="5" cy="5" r="4.500" fill={c} /><path d="M3 3l4 4M7 3L3 7" stroke="#6a6f74" /></Svg>
      <Svg w={28} h={28} className="mt-[9px]"><path d="M14 1h13v13A13 13 0 1 1 14 1z" stroke={c} strokeWidth="1.500" fill="#5a5f6a" /><circle cx="14" cy="14" r="9.500" stroke={c} /><path d="M11 7h6l4 4v6l-4 4h-6l-4-4v-6z" stroke={c} strokeWidth="1.800" /></Svg>
      <Caret className="mt-[9px]" color={c} />
      <div className="mt-[5px] h-px w-[34px] bg-[#676c70]" />
      <Svg w={30} h={30} className="mt-[4px]"><path d="M10 28C7 22 4 19 1.500 16c1-2 4-1 6.500 2L5.500 7c0-2 2.500-2 3 0l2.500 8-.500-12c0-2 3-2 3 0l1 11 1.500-11c.500-2 3-2 3 0l-.500 12 4-8c1-2 3-1 2.500 1-1 5-1 10-4 15l-1 5z" fill="#5f646e" stroke={c} strokeWidth="1.300" /></Svg>
      <Svg w={32} h={30} className="mt-[4px]"><path d="M3 3l18 18M21 3L3 21" stroke={c} strokeWidth="1.500" /><path d="M1 7V1h6zM16 1h6v6zM1 15v6h6z" fill={c} /><circle cx="21" cy="20" r="6" fill="#5f646e" stroke={c} strokeWidth="1.500" /><path d="M25 24l5 5" stroke={c} strokeWidth="3" /></Svg>
      <Caret className="mt-[8px]" color={c} />
      <Svg w={30} h={30} className="mt-[3px]"><ellipse cx="15" cy="16" rx="13" ry="5.500" stroke={c} strokeWidth="1.500" /><path d="M12 28V8H9l6-7 5 7h-3v20z" fill="#5f646e" stroke={c} strokeWidth="1.300" /><path d="M10 16v10l-6-5z" fill={c} /></Svg>
      <Caret className="mt-[8px]" color={c} />
      <div className="mt-[4px] h-px w-[34px] bg-[#676c70]" />
      <Svg w={30} h={30} className="mt-[4px]"><path d="M1 1h7v8H1zM11 1h7v8h-7zM21 1h7v8h-7z" stroke={c} strokeWidth="1.500" /><path d="M1 12.500h20v16H1z" stroke={c} strokeWidth="1.500" fill="#5f646e" /><path d="M7 15v11l8-5.500z" fill={c} /></Svg>
      <Svg w={10} h={10} className="mt-auto mr-[2px] mb-[1px] self-end"><circle cx="5" cy="5" r="4.200" stroke={c} strokeWidth="1.500" /><path d="M2.500 4.500h5L5 7z" fill={c} /></Svg>
    </div>
  );
}

function CommandLine() {
  return (
    <div className="absolute top-[565px] left-[131px] font-['Liberation_Mono'] text-[15px] leading-[19px]">
      <div className="flex flex-col items-start pl-[79px]">
        <div className="h-[38px] w-[1148px] rounded-[2px] bg-linear-to-b from-[#484b4e] to-[#545556] pt-px pl-[3px] text-[#a3a5a7]">
          <T w={1142}>Incompatible graphics hardware. Upgrading the video card drivers or video card is a possible solution. Fast shaded mode for the</T>
          <T w={358}>selected visual style has been disabled.</T>
        </div>
        <div className="mt-[5px] h-[18px] w-[176px] rounded-[2px] bg-[#565758] pt-px pl-[3px] leading-[18px] text-[#c6c7c8]"><T w={169}>Regenerating model.</T></div>
        <div className="mt-[6px] h-[18px] w-[266px] rounded-[2px] bg-[#5a5b5c] pt-px pl-[3px] leading-[18px] text-[#e4e4e4]"><T w={259}>Command:  Regenerating model.</T></div>
      </div>
      <div className="mt-[4px] flex h-[33px] items-end">
        <div className="flex h-[33px] w-[72px] items-center rounded-l-[4px] bg-[#2a303d]">
          <Svg w={7} h={22} className="ml-[5px]"><path d="M1 0v22M5.500 0v22" stroke="#b4b6ba" strokeWidth="2" strokeDasharray="2 2" /></Svg>
          <Svg w={12} h={12} className="ml-[8px]"><path d="M1 1l10 10M11 1L1 11" stroke="#b4b6ba" strokeWidth="2.400" /></Svg>
          <Svg className="ml-[14px]"><path d="M1 17L11 7.500A5 5 0 0 1 16.500 0.500L14 3.500v2.500h2.500L19.500 3.500A5 5 0 0 1 13 9.500L3.500 19.500z" fill="#b4b6ba" /></Svg>
        </div>
        <div className="flex h-[32px] w-[1239px] items-center rounded-[2px] bg-[#bcbdbf]">
          <Svg h={16} className="ml-[5px]"><rect x=".500" y=".500" width="19" height="15" fill="#b1b2b4" stroke="#66686b" /><path d="M0 0h20v4H0z" fill="#5c5e61" /><path d="M2.500 7l3 2-3 2M6.500 11.500h5" stroke="#66686b" /></Svg>
          <Caret big className="ml-[2px]" color="#4c4e52" />
          <span className="mt-[2px] ml-[9px] text-[#5c5e61] italic"><T w={124.500}>Type a command</T></span>
          <Svg w={10} h={6} className="mr-[5px] ml-auto"><path d="M0 5.500h9.500L4.700.500z" fill="#4c4e52" /></Svg>
        </div>
      </div>
    </div>
  );
}

function Viewport() {
  return (
    <main className="relative h-[687px] bg-[#222931]">
      <div className="flex justify-between pl-[8px] text-[13.500px] leading-5 text-[#e6e6e6]">
        <div className="flex pt-[5px]"><T w={17}>[−]</T><span className="ml-[4px]"><T w={194}>[Custom View][2D Wireframe]</T></span></div>
        <Svg w={64} h={16} className="mt-[11px] mr-[15px]">
          <rect x="0" y="8" width="13" height="3" fill="#eee" />
          <path d="M29 1.500h8.500V9" stroke="#eee" strokeWidth="2" /><rect x="27" y="4.500" width="7" height="7" stroke="#eee" strokeWidth="2.500" />
          <path d="M51 2l9 10M60 2l-9 10" stroke="#eee" strokeWidth="2.500" />
        </Svg>
      </div>
      <Tire />
      <ViewCube />
      <NavBar />
      <svg width="98" height="98" viewBox="0 0 98 98" fill="none" shapeRendering="crispEdges" className="absolute top-[582px] left-[1451px]">
        <path d="M0 48.500h45M52 48.500h45M48.500 0v45M48.500 52v45M45.500 45.500h6v6h-6z" stroke="#fff" />
      </svg>
      <CommandLine />
    </main>
  );
}

/* ---------- status bar ---------- */
const Cell = ({ className = "", children }) => <div className={`flex h-[31px] shrink-0 items-center bg-[#3b4453] ${className}`}>{children}</div>;
const On = ({ className = "", children }) => <div className={`flex h-[28px] w-[28px] shrink-0 items-center justify-center bg-[#6391c4] ${className}`}>{children}</div>;
const Compass = ({ color = L, extra }) => <Svg><path d="M9 1l3.500 8 .500 5 4.500 5.500-5-1.500L9 16l-3.500 2L.500 19.500 5 14l.500-5z" fill={color} />{extra}</Svg>;

function StatusBar() {
  return (
    <footer className="flex h-[39px] items-start pt-[2px] text-[15px] leading-5 text-[#f0f0f0]">
      <div className="mt-[3px] ml-[23px]"><Menu /></div>
      <div className="-mt-[2px] ml-[11px] flex h-[30px] w-[86px] items-center bg-[#3b4453] pb-px pl-[22px] font-bold text-white [clip-path:polygon(12px_0,86px_0,74px_100%,0_100%)]"><T w={43}>Model</T></div>
      <div className="mt-[3px] ml-[10px]"><T w={50}>Layout1</T></div>
      <Slash className="mt-[3px] ml-[10px]" />
      <div className="mt-[4px] ml-[12px]"><Plus /></div>
      <Slash className="mt-[3px] ml-[11px]" />
      <div className="ml-[614px] flex">
        <Cell className="w-[59px] pl-[5px]"><T w={50}>MODEL</T></Cell>
        <Cell className="ml-[3px] w-[80px] pl-[5px]">
          <Svg><path d="M4.500 0v20M9.500 0v20M14.500 0v20M0 5h19M0 10h19M0 15h19" stroke={L} strokeWidth="1.200" /></Svg>
          <Svg className="ml-[9px]"><path d="M3 3.500h15M3 10h15M3 16.500h15" stroke={L} strokeWidth="2.500" strokeDasharray="2.500 3.700" /></Svg>
          <Caret big className="ml-[11px]" />
        </Cell>
        <Cell className="ml-[3px] w-[130px] pl-[5px]">
          <Svg><path d="M.500 0v19.500H20M.500 13.500h6v6" stroke={L} /></Svg>
          <On className="ml-[6px]"><Svg><circle cx="9" cy="10.500" r="7.800" stroke="#eef3f9" /><path d="M9 10.500h11M9 10.500L16 2" stroke="#eef3f9" /><path d="M13 6a7 7 0 0 1 2 5" stroke="#eef3f9" /></Svg></On>
          <Caret big className="ml-[6px]" />
          <Svg className="ml-[10px]"><path d="M2 2l15 16" stroke="#d9686b" strokeWidth="1.200" /><path d="M10 0v19" stroke="#58bd80" strokeWidth="1.200" /><rect x="8" y="8" width="3.500" height="3.500" fill="#3b4453" stroke={L} /></Svg>
          <Caret big className="ml-[10px]" />
        </Cell>
        <Cell className="ml-px w-[80px] pl-px">
          <On><Svg><path d="M15 1L1 17.500h18" stroke="#eef3f9" strokeWidth="1.200" /><rect x="6" y="8" width="3.500" height="3.500" fill="#fff" /></Svg></On>
          <On className="ml-[2px]"><Svg><path d="M6 2.500h12.500v17H2.500V7" stroke="#eef3f9" strokeWidth="1.300" /><rect x=".500" y=".500" width="5" height="5" stroke="#eef3f9" strokeWidth="1.300" /></Svg></On>
          <Caret big className="ml-[6px]" />
        </Cell>
        <Cell className="ml-[3px] w-[132px] pl-px">
          <On><Compass color="#fff" extra={<circle cx="16" cy="4" r="3.300" stroke="#eef3f9" />} /></On>
          <div className="ml-[6px]"><Compass extra={<path d="M16 0l-3 5h2.500L14 9l5-5.500h-2.500L18 0z" fill={L} stroke="#3b4453" strokeWidth=".500" />} /></div>
          <div className="ml-[10px]"><Compass /></div>
          <span className="ml-[12px]"><T w={15}>1:1</T></span>
          <Caret big className="ml-[5px]" />
        </Cell>
        <Cell className="ml-[3px] w-[50px] pl-[5px]">
          <Svg><circle cx="10" cy="10" r="5" stroke={L} strokeWidth="4.500" /><circle cx="10" cy="10" r="8.500" stroke={L} strokeWidth="3" strokeDasharray="3.500 3.176" strokeDashoffset="1.750" /></Svg>
          <Caret big className="ml-[10px]" />
        </Cell>
        <Cell className="ml-px w-[30px] justify-center"><Plus /></Cell>
        <Cell className="ml-[3px] w-[30px] justify-center"><Svg><path d="M.500.500h7v7h-7zM8 12l4.500 7.500h-9z" stroke={L} /><circle cx="15.500" cy="9" r="4.200" stroke={L} /></Svg></Cell>
        <Cell className="ml-[3px] w-[4px]" />
        <Cell className="ml-[3px] w-[30px] justify-center"><Svg h={15}><rect x=".500" y=".500" width="19" height="14" stroke={L} /><path d="M13 2h5v5zM2 8v5h5zM12 7l4-4M4 11l3.500-3" fill={L} stroke={L} strokeWidth=".600" /></Svg></Cell>
        <Cell className="ml-[2px] w-[30px] justify-center"><Menu /></Cell>
      </div>
    </footer>
  );
}

export default function App() {
  return (
    <div className="h-[960px] w-[1578px] overflow-hidden bg-[#11161b] font-['Noto_Sans',sans-serif]">
      <div className="flex h-[960px] w-[1576px] flex-col overflow-hidden rounded-[9px] border-r border-[#1283b4] bg-[#222931]">
        <TitleBar />
        <Tabs />
        <Ribbon />
        <FileTabs />
        <div className="ml-[3px] h-[5px] w-[1568px] shrink-0 bg-[#3b4453]" />
        <Viewport />
        <div className="ml-[3px] h-[5px] w-[1568px] shrink-0 bg-[#3b4453]" />
        <StatusBar />
      </div>
    </div>
  );
}
